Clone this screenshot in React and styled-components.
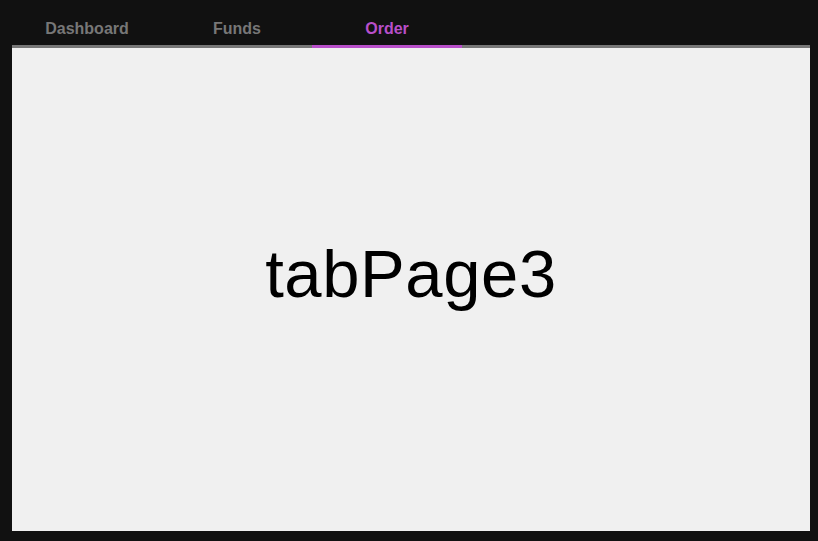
import React, { useState } from "react";
import styled, { createGlobalStyle } from "styled-components";

const GlobalStyle = createGlobalStyle`
  html, body {
    margin: 0;
    padding: 0;
    background: #111111;
  }
  #root {
    height: 100vh;
  }
`;

const tabs = ["Dashboard", "Funds", "Order"];

export default function App() {
  const [active, setActive] = useState(2);

  return (
    <>
      <GlobalStyle />
      <Frame>
        <TabBar>
          {tabs.map((t, i) => (
            <Tab key={t} $active={i === active} onClick={() => setActive(i)}>
              {t}
            </Tab>
          ))}
        </TabBar>
        <Page>
          <PageLabel>tabPage{active + 1}</PageLabel>
        </Page>
      </Frame>
    </>
  );
}

const Frame = styled.div`
  display: flex;
  flex-direction: column;
  height: 100%;
  box-sizing: border-box;
  padding: 0 8px 10px 12px;
`;

const TabBar = styled.div`
  display: flex;
  height: 48px;
  border-bottom: 3px solid #777777;
  box-sizing: border-box;
`;

const Tab = styled.div`
  width: 150px;
  display: flex;
  align-items: center;
  justify-content: center;
  padding-top: 12px;
  box-sizing: border-box;
  margin-bottom: -3px;
  border-bottom: 3px solid ${(p) => (p.$active ? "#b84fc9" : "transparent")};
  color: ${(p) => (p.$active ? "#b84fc9" : "#777777")};
  font-family: "Liberation Sans", Arial, sans-serif;
  font-weight: bold;
  font-size: 16px;
  cursor: pointer;
`;

const Page = styled.div`
  flex: 1;
  background: #f0f0f0;
  display: flex;
  align-items: center;
  justify-content: center;
  padding-bottom: 32px;
`;

const PageLabel = styled.div`
  font-family: "Liberation Sans", Arial, sans-serif;
  font-size: 67px;
  letter-spacing: 0.6px;
  color: #000000;
`;
